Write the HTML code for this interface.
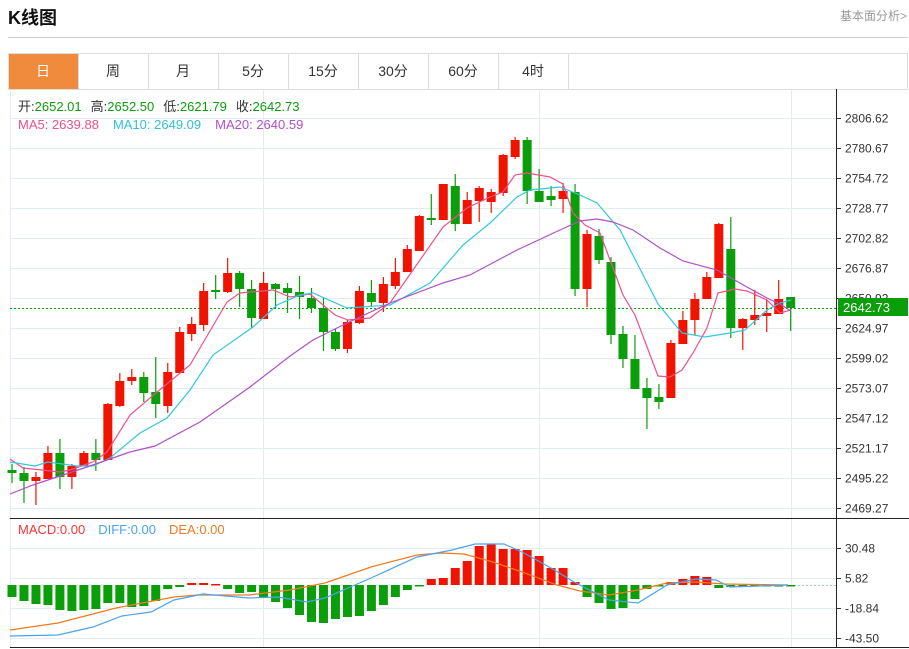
<!DOCTYPE html>
<html><head><meta charset="utf-8"><style>
body{margin:0;background:#fff;width:909px;height:649px;overflow:hidden;font-family:"Liberation Sans","Noto Sans CJK SC",sans-serif;}
</style></head><body>
<svg id="s" width="909" height="649" xmlns="http://www.w3.org/2000/svg" style="position:absolute;left:0;top:0;font-family:'Liberation Sans','Noto Sans CJK SC',sans-serif">
<text x="8" y="24" font-size="18" font-weight="bold" fill="#111">K线图</text>
<text x="907" y="20" font-size="12" fill="#999" text-anchor="end">基本面分析&gt;</text>
<line x1="8" y1="37.5" x2="908" y2="37.5" stroke="#d0d0d0"/>
<rect x="8.5" y="53.5" width="899" height="36" fill="#fff" stroke="#ddd"/>
<rect x="9" y="54" width="69" height="35" fill="#f08a3c"/>
<g id="tabs" font-size="14" fill="#333" text-anchor="middle"></g>
<g id="grid"></g>
<g id="c"></g>
<g id="m"></g>
<g font-size="13">
<text x="18" y="111"><tspan fill="#333">开:</tspan><tspan fill="#0a9e0a">2652.01</tspan><tspan fill="#333" dx="9">高:</tspan><tspan fill="#0a9e0a">2652.50</tspan><tspan fill="#333" dx="9">低:</tspan><tspan fill="#0a9e0a">2621.79</tspan><tspan fill="#333" dx="9">收:</tspan><tspan fill="#0a9e0a">2642.73</tspan></text>
<text x="18" y="129"><tspan fill="#f0508a">MA5: 2639.88</tspan><tspan fill="#30c0dc" dx="14">MA10: 2649.09</tspan><tspan fill="#b050c8" dx="14">MA20: 2640.59</tspan></text>
<text x="18" y="534"><tspan fill="#f33">MACD:0.00</tspan><tspan fill="#4aa3f0" dx="13">DIFF:0.00</tspan><tspan fill="#f07a20" dx="13">DEA:0.00</tspan></text>
</g>
</svg>
<script>
var NS="http://www.w3.org/2000/svg";
function el(p,t,a,txt){var e=document.createElementNS(NS,t);for(var k in a)e.setAttribute(k,a[k]);if(txt)e.textContent=txt;document.getElementById(p).appendChild(e);return e;}
var tabs=["日","周","月","5分","15分","30分","60分","4时"];
tabs.forEach(function(t,i){var x=8+70*i;el("tabs","text",{x:x+35,y:76,fill:i==0?"#fff":"#333"},t);el("tabs","line",{x1:x+70.5,y1:54,x2:x+70.5,y2:89,stroke:"#ddd"});});
var labs=["2806.62","2780.67","2754.72","2728.77","2702.82","2676.87","2650.92","2624.97","2599.02","2573.07","2547.12","2521.17","2495.22","2469.27"];
for(var i=0;i<14;i++){var y=118+30*i+0.5;el("grid","line",{x1:10,y1:y,x2:836,y2:y,stroke:"#e3ebf3"});el("grid","line",{x1:836,y1:y,x2:841,y2:y,stroke:"#333"});el("grid","text",{x:845,y:y+4,"font-size":12,fill:"#333"},labs[i]);}
var ml=[["30.48",548],["5.82",578],["-18.84",608],["-43.50",638]];
ml.forEach(function(a){var y=a[1]+0.5;el("grid","line",{x1:10,y1:y,x2:836,y2:y,stroke:"#e3ebf3"});el("grid","line",{x1:836,y1:y,x2:841,y2:y,stroke:"#333"});el("grid","text",{x:845,y:y+4,"font-size":12,fill:"#333"},a[0]);});
[10.5,263.5,539.5,791.5].forEach(function(x){el("grid","line",{x1:x,y1:89,x2:x,y2:647,stroke:"#e3ebf3"});});
el("grid","line",{x1:836.5,y1:89,x2:836.5,y2:648,stroke:"#222"});
el("grid","line",{x1:10,y1:518.5,x2:909,y2:518.5,stroke:"#222"});
el("grid","line",{x1:10,y1:647.5,x2:909,y2:647.5,stroke:"#222"});
el("grid","line",{x1:10,y1:308.5,x2:836,y2:308.5,stroke:"#0a0","stroke-dasharray":"2,2"});
el("grid","line",{x1:790,y1:585.5,x2:836,y2:585.5,stroke:"#9cd0e8","stroke-dasharray":"2,2"});
el("grid","rect",{x:838,y:298,width:70,height:18,fill:"#0a9e0a"});
el("grid","text",{x:843,y:312,"font-size":13,fill:"#fff"},"2642.73");
var C=[[470,473,464,483,0],[473,481,467,503,0],[477,481,472,505,1],[453,479,446,479,1],[453,477,439,489,0],[466,477,464,489,1],[453,466,451,466,1],[453,460,439,471,0],[404,460,403,460,1],[381,406,373,407,1],
[377,381,369,385,1],[377,393,372,402,0],[392,404,357,418,0],[372,406,363,413,1],[332,373,327,373,1],[324,334,317,341,1],[291,325,283,331,1],[290,292,275,299,0],[273,292,258,293,1],[273,289,271,307,0],
[289,318,280,328,0],[283,319,272,319,1],[284,289,283,308,0],[288,293,283,313,0],[292,297,276,319,0],[298,308,288,313,0],[308,332,297,351,0],[332,349,329,351,0],[322,349,320,353,1],[291,323,286,324,1],
[293,302,280,307,0],[284,303,277,312,1],[272,286,258,289,1],[249,272,245,272,1],[216,251,215,251,1],[218,220,194,225,0],[184,220,184,220,1],[186,224,174,231,0],[200,224,192,224,1],[188,201,186,222,1],
[192,202,189,213,1],[155,193,154,196,1],[140,157,137,159,1],[140,191,137,204,0],[191,202,169,202,0],[196,200,186,206,0],[191,199,183,213,1],[192,289,184,296,0],[234,289,230,307,1],[236,260,229,264,0],
[262,335,257,344,0],[334,359,326,368,0],[359,389,335,389,0],[388,398,378,429,0],[397,402,384,409,0],[343,398,340,398,1],[320,344,311,344,1],[299,320,293,335,1],[277,299,272,299,1],[224,278,223,278,1],
[249,328,217,338,0],[319,328,318,350,1],[315,320,290,325,1],[313,316,300,332,1],[299,314,280,314,1],[297,308,297,331,0]];
var M=[597,601,604,605,610,611,610,609,603,603,607,606,601,589,587,583,583,584,589,593,592,597,602,608,615,622,623,619,617,616,611,605,597,590,586,579,578,568,561,546,544,549,549,550,556,568,568,582,597,603,609,608,599,589,586,582,579,576,577,588,587,586,586,586,586,586];
var R="#f01400",G="#0a9e0a";
C.forEach(function(c,i){var x=12+11.98*i,col=c[4]?R:G;
el("c","line",{x1:x,y1:c[2],x2:x,y2:c[3],stroke:col,"stroke-width":1.2});
el("c","rect",{x:x-4.5,y:c[0],width:9,height:Math.max(c[1]-c[0],2),fill:col});
var v=M[i],z=585;var mc=v<z?R:G;if(i==15||i==16||i==17)mc=R;
el("m","rect",{x:x-4.5,y:Math.min(v,z),width:9,height:Math.max(Math.abs(v-z),1.5),fill:mc});
});
function pl(p,pts,col){el(p,"polyline",{points:pts,fill:"none",stroke:col,"stroke-width":1.2});}
pl("c","10,459 23,468 60,472 70,470 93,462 107,452 130,415 157,392 190,365 227,302 240,293 273,290 290,297 310,294 335,315 348,320 370,318 390,303 413,270 443,227 467,208 490,197 503,192 515,175 527,173 550,177 563,184 573,213 585,225 600,233 623,295 635,315 658,376 670,377 682,370 693,353 707,328 718,293 735,289 747,291 767,300 780,313 791,310","#f0508a");
pl("c","10,462 35,466 48,462 77,466 93,466 110,458 140,433 167,418 190,390 213,355 253,327 277,305 300,295 313,293 347,308 390,305 430,283 463,245 490,223 517,197 530,190 560,187 580,195 597,203 620,230 658,304 682,333 705,337 730,333 745,330 767,310 780,303 791,300","#30c8e0");
pl("c","10,494 33,485 87,467 130,452 155,446 200,422 250,387 290,356 313,340 347,323 390,303 443,283 470,275 517,250 560,230 580,221 597,219 613,222 633,230 660,248 683,261 717,270 747,287 767,298 780,304 791,311","#b050c8");
pl("m","10,630 58,623 116,608 174,597 197,595 249,595 290,590 325,583 371,567 417,555 441,553 464,554 493,562 522,572 557,585 580,591 609,595 638,590 667,583 696,582 725,584 788,585","#f07a20");
pl("m","10,636 58,635 93,627 122,616 151,612 174,600 203,594 249,598 278,597 307,602 325,598 371,578 417,557 452,550 475,544 504,544 522,552 551,568 574,582 609,600 638,603 667,585 696,579 716,580 730,587 788,585","#4aa3f0");
</script>
</body></html>
